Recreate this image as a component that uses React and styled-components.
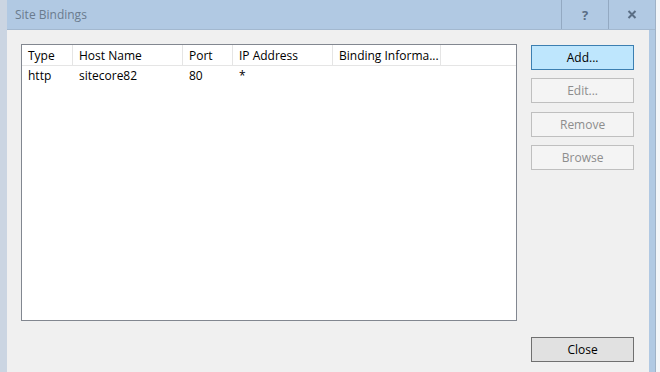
import React from "react";
import styled, { createGlobalStyle } from "styled-components";

const Global = createGlobalStyle`
  html, body {
    margin: 0;
    padding: 0;
    background: #f4f6f9;
  }
  body {
    font-family: "Open Sans", "Noto Sans", "DejaVu Sans", sans-serif;
    font-size: 12px;
  }
`;

const Screen = styled.div`
  display: flex;
  width: 660px;
  height: 372px;
  overflow: hidden;
`;

const LeftEdge = styled.div`
  width: 7px;
  background: #cbd5e2;
`;

const Window = styled.div`
  width: 648px;
  display: flex;
  flex-direction: column;
  background: #b1c9e3;
  border-right: 1px solid #9fb1c6;
`;

const TitleBar = styled.div`
  height: 29px;
  display: flex;
  align-items: stretch;
  border-bottom: 1px solid #a3b8cf;
`;

const Title = styled.div`
  flex: 1;
  padding-left: 8px;
  display: flex;
  align-items: center;
  color: #6a7b8e;
  font-size: 12px;
`;

const TitleButton = styled.div`
  width: 46px;
  display: flex;
  align-items: center;
  justify-content: center;
  border-left: 1px solid #93a9c2;
  color: #5a6e85;
  font-weight: bold;
  font-size: 13px;
`;

const Client = styled.div`
  flex: 1;
  margin-right: 6px;
  background: #f0f0f0;
  display: flex;
  padding: 14px 15px 0 14px;
  gap: 14px;
`;

const List = styled.div`
  width: 495px;
  height: 275px;
  background: #fff;
  border: 1px solid #828790;
  display: flex;
  flex-direction: column;
`;

const Row = styled.div`
  display: flex;
  height: ${(p) => (p.$head ? "20px" : "18px")};
  border-bottom: ${(p) => (p.$head ? "1px solid #e5e5e5" : "none")};
`;

const Cell = styled.div`
  width: ${(p) => p.$w}px;
  padding-left: 6px;
  box-sizing: border-box;
  display: flex;
  align-items: center;
  color: #000;
  border-right: ${(p) => (p.$head ? "1px solid #e5e5e5" : "none")};
  white-space: nowrap;
`;

const Side = styled.div`
  display: flex;
  flex-direction: column;
  width: 103px;
  padding-top: 1px;
`;

const Button = styled.div`
  height: 25px;
  box-sizing: border-box;
  display: flex;
  align-items: center;
  justify-content: center;
  margin-bottom: ${(p) => p.$mb || 0}px;
  margin-top: ${(p) => p.$mt || 0}px;
  border: 1px solid
    ${(p) => (p.$variant === "hot" ? "#3c7fb1" : p.$variant === "off" ? "#bfbfbf" : "#707070")};
  background: ${(p) => (p.$variant === "hot" ? "#bee6fd" : p.$variant === "off" ? "#f4f4f4" : "#e1e1e1")};
  color: ${(p) => (p.$variant === "off" ? "#8d8d8d" : "#000")};
`;

const cols = [
  { label: "Type", w: 51 },
  { label: "Host Name", w: 110 },
  { label: "Port", w: 50 },
  { label: "IP Address", w: 100 },
  { label: "Binding Informa...", w: 108 },
];

const row = ["http", "sitecore82", "80", "*", ""];

function CloseGlyph() {
  return (
    <svg width="10" height="9" viewBox="0 0 10 9">
      <path d="M1.5 1 L8.5 8 M8.5 1 L1.5 8" stroke="#5a6e85" strokeWidth="2" />
    </svg>
  );
}

export default function App() {
  return (
    <Screen>
      <Global />
      <LeftEdge />
      <Window>
        <TitleBar>
          <Title>Site Bindings</Title>
          <TitleButton>?</TitleButton>
          <TitleButton>
            <CloseGlyph />
          </TitleButton>
        </TitleBar>
        <Client>
          <List>
            <Row $head>
              {cols.map((c) => (
                <Cell key={c.label} $w={c.w} $head>
                  {c.label}
                </Cell>
              ))}
            </Row>
            <Row>
              {row.map((v, i) => (
                <Cell key={i} $w={cols[i].w}>
                  {v}
                </Cell>
              ))}
            </Row>
          </List>
          <Side>
            <Button $variant="hot" $mb={8}>Add...</Button>
            <Button $variant="off" $mb={9}>Edit...</Button>
            <Button $variant="off" $mb={8}>Remove</Button>
            <Button $variant="off">Browse</Button>
            <Button $mt={167}>Close</Button>
          </Side>
        </Client>
      </Window>
    </Screen>
  );
}
